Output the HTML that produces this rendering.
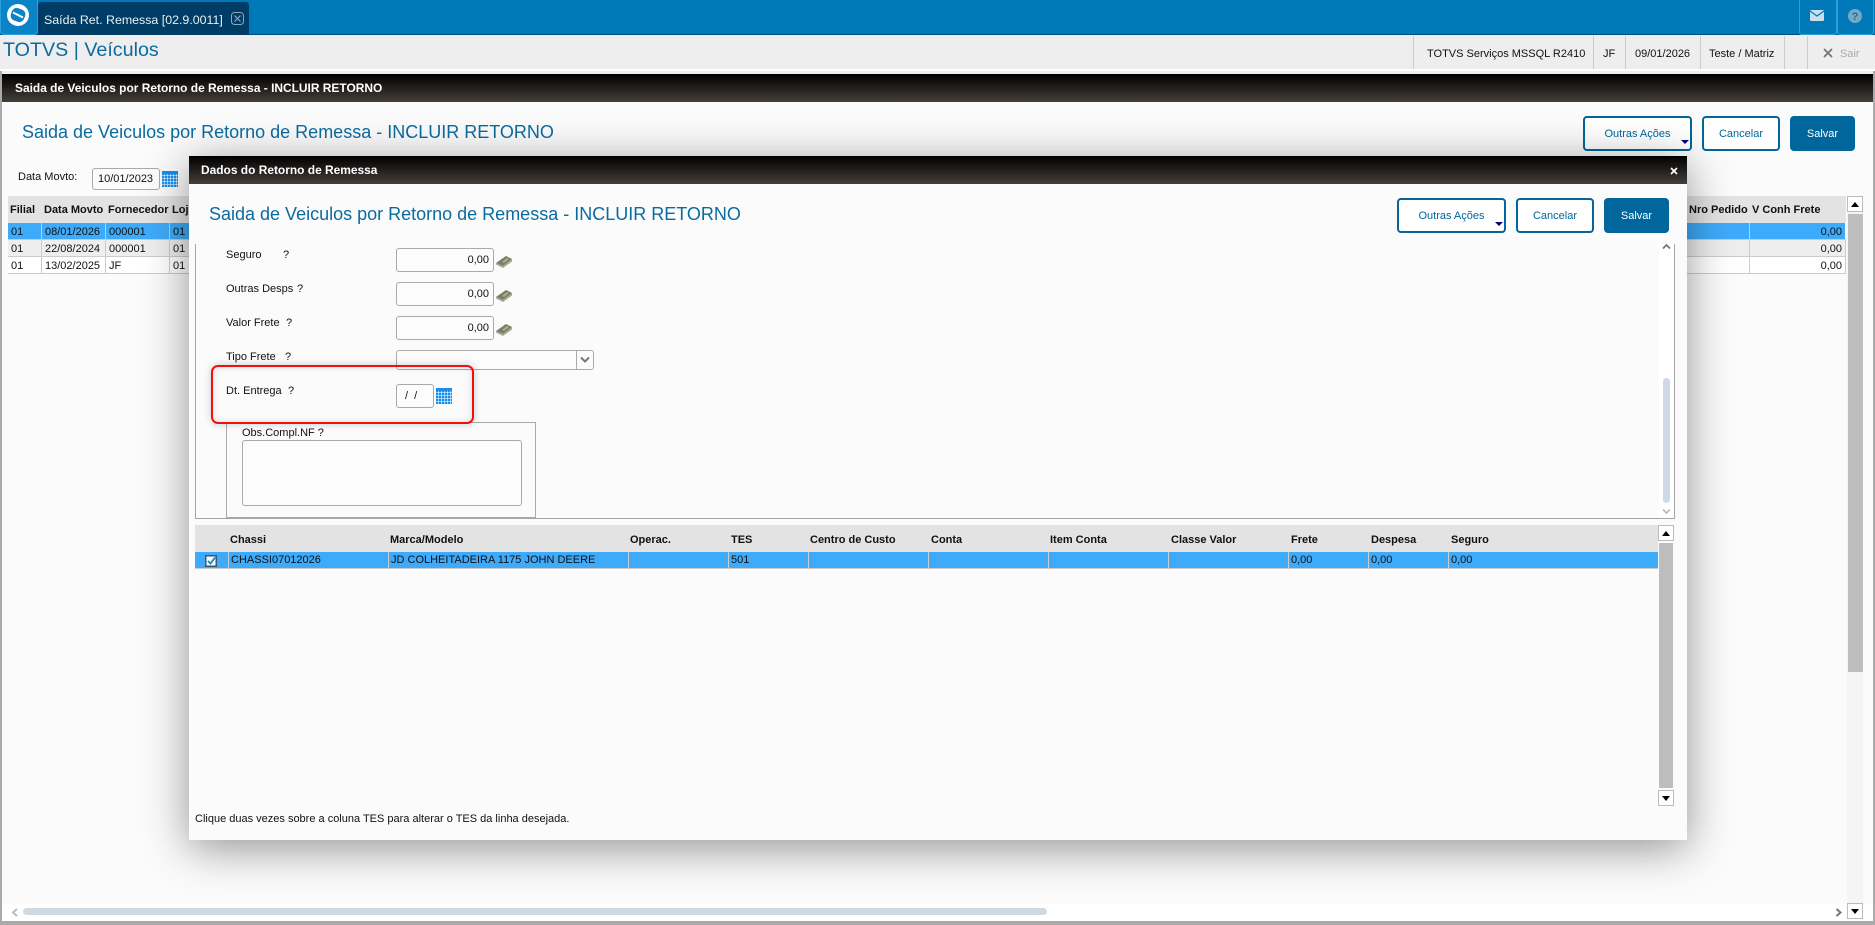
<!DOCTYPE html>
<html lang="pt-BR"><head><meta charset="utf-8"><title>TOTVS | Veículos</title>
<style>
*{box-sizing:border-box}
html,body{margin:0;padding:0;width:1875px;height:925px;overflow:hidden;background:#fbfbfb;font-family:"Liberation Sans",sans-serif;font-size:11px;color:#111}
.a{position:absolute}
.t{position:absolute;white-space:nowrap;line-height:14px;height:14px;margin-top:1px}
.b{font-weight:bold}
.inp{position:absolute;background:#fcfcfc;border:1px solid #aaa;border-radius:3px}
.btn{position:absolute;border:2px solid #00669b;border-radius:4px;background:#fff;color:#00669b;text-align:center;line-height:33px;height:35px}
.sv{background:#00669b;color:#fff}
.bar{position:absolute;background:linear-gradient(#000,#443f3b);color:#fff;font-weight:bold}
.v{position:absolute;width:1px;background:#ccc}
.h{position:absolute;height:1px;background:#ccc}
.cal{position:absolute;width:16px;height:16px;background-color:#1590ee;background-image:linear-gradient(#1590ee 3px,transparent 3px),repeating-linear-gradient(90deg,transparent 0 2px,rgba(255,255,255,.55) 2px 3px),repeating-linear-gradient(0deg,transparent 0 2px,rgba(255,255,255,.55) 2px 3px)}
.ttl{color:#0a6ba0;font-size:18px;line-height:24px;height:24px;white-space:nowrap;position:absolute}
.sb{position:absolute;background:#fff;border:1px solid #bbb;width:15px;height:16px}
.up:after,.dn:after{content:"";position:absolute;left:3px;border-left:4px solid transparent;border-right:4px solid transparent}
.up:after{top:5px;border-bottom:5px solid #000}
.dn:after{top:5px;border-top:5px solid #000}
svg{position:absolute;display:block}
</style></head><body>

<!-- top bar -->
<div class="a" style="left:0;top:0;width:1875px;height:35px;background:#0079b8;border-bottom:1px solid #00527e"></div>
<div class="a" style="left:0;top:0;width:38px;height:35px;background:#0a84c6;border:1px solid #2a9fdc;border-top:0;border-radius:0 0 4px 4px"></div>
<svg style="left:7px;top:4px" width="22" height="22" viewBox="0 0 22 22"><circle cx="11" cy="11" r="11" fill="#fff"/><rect x="4" y="4.5" width="14" height="13" rx="5" fill="#0a84c6" transform="rotate(20 11 11)"/><path d="M6 8.5L16 13.5" stroke="#fff" stroke-width="2"/></svg>
<div class="a" style="left:38px;top:2px;width:211px;height:33px;background:#003d66;border-radius:3px 3px 0 0"></div>
<span class="t" style="left:44px;top:12px;color:#e8f0f5;font-size:12.4px">Saída Ret. Remessa [02.9.0011]</span>
<svg style="left:231px;top:12px" width="13" height="13" viewBox="0 0 13 13"><rect x=".5" y=".5" width="12" height="12" rx="3" fill="none" stroke="#8fa6b6"/><path d="M3.5 3.5l6 6M9.5 3.5l-6 6" stroke="#8fa6b6" stroke-width="1.2"/></svg>
<div class="a" style="left:1799px;top:0;width:38px;height:35px;border:1px solid #2a9fdc;border-top:0;border-radius:0 0 3px 3px"></div>
<div class="a" style="left:1837px;top:0;width:37px;height:35px;border:1px solid #2a9fdc;border-top:0;border-radius:0 0 3px 3px"></div>
<svg style="left:1810px;top:10px" width="14" height="11" viewBox="0 0 14 11"><rect width="14" height="11" rx="1" fill="#c8dfee"/><path d="M0 1l7 5 7-5" fill="none" stroke="#0079b8" stroke-width="1.3"/></svg>
<svg style="left:1848px;top:9px" width="14" height="14" viewBox="0 0 14 14"><circle cx="7" cy="7" r="7" fill="#7aa7c2"/><text x="7" y="11" text-anchor="middle" font-family="Liberation Sans" font-weight="bold" font-size="11" fill="#0079b8">?</text></svg>

<!-- header band -->
<div class="a" style="left:0;top:35px;width:1875px;height:34px;background:#eee"></div>
<div class="a" style="left:0;top:69px;width:1875px;height:2px;background:#fff"></div>
<div class="a" style="left:0;top:71px;width:1875px;height:3px;background:#f0f0f0"></div>
<span class="t" style="left:3px;top:37px;font-size:19.7px;line-height:24px;height:24px;color:#0a6ba0">TOTVS | Veículos</span>
<div class="v" style="left:1413px;top:36px;height:33px"></div>
<div class="v" style="left:1593px;top:36px;height:33px"></div>
<div class="v" style="left:1625px;top:36px;height:33px"></div>
<div class="v" style="left:1700px;top:36px;height:33px"></div>
<div class="v" style="left:1784px;top:36px;height:33px"></div>
<div class="v" style="left:1807px;top:36px;height:33px"></div>
<span class="t" style="left:1427px;top:46px">TOTVS Serviços MSSQL R2410</span>
<span class="t" style="left:1603px;top:46px">JF</span>
<span class="t" style="left:1635px;top:46px">09/01/2026</span>
<span class="t" style="left:1709px;top:46px">Teste / Matriz</span>
<svg style="left:1823px;top:48px" width="10" height="10" viewBox="0 0 10 10"><path d="M1 1l8 8M9 1l-8 8" stroke="#777" stroke-width="1.8"/></svg>
<span class="t" style="left:1840px;top:46px;color:#aaa">Sair</span>

<!-- page frame -->
<div class="a" style="left:0;top:71px;width:2px;height:854px;background:#aaa"></div>
<div class="a" style="left:1873px;top:71px;width:2px;height:854px;background:#aaa"></div>
<div class="a" style="left:0;top:921px;width:1875px;height:4px;background:#aaa"></div>
<div class="bar" style="left:2px;top:74px;width:1871px;height:28px"></div>
<span class="t b" style="left:15px;top:80px;color:#fff;font-size:11.95px">Saida de Veiculos por Retorno de Remessa - INCLUIR RETORNO</span>
<div class="a" style="left:2px;top:904px;width:1871px;height:17px;background:#fff"></div>

<span class="ttl" style="left:22px;top:120px">Saida de Veiculos por Retorno de Remessa - INCLUIR RETORNO</span>
<div class="btn" style="left:1583px;top:116px;width:109px">Outras Ações</div>
<div class="a" style="left:1681px;top:140px;border-left:4px solid transparent;border-right:4px solid transparent;border-top:4px solid #00008b"></div>
<div class="btn" style="left:1702px;top:116px;width:78px">Cancelar</div>
<div class="btn sv" style="left:1790px;top:116px;width:65px">Salvar</div>

<span class="t" style="left:18px;top:169px">Data Movto:</span>
<div class="inp" style="left:92px;top:168px;width:68px;height:22px"></div>
<span class="t" style="left:98px;top:171px">10/01/2023</span>
<div class="cal" style="left:162px;top:171px"></div>

<!-- background grid -->
<div class="a" style="left:8px;top:196px;width:1838px;height:27px;background:#e3e3e3"></div>
<div class="a" style="left:8px;top:223px;width:1837px;height:16px;background:#3eabfa"></div>
<div class="a" style="left:8px;top:240px;width:1838px;height:16px;background:#eee"></div>
<div class="a" style="left:8px;top:257px;width:1838px;height:16px;background:#fff"></div>
<div class="h" style="left:8px;top:239px;width:1838px"></div>
<div class="h" style="left:8px;top:256px;width:1838px"></div>
<div class="h" style="left:8px;top:273px;width:1838px"></div>
<div class="v" style="left:41px;top:223px;height:50px"></div>
<div class="v" style="left:105px;top:223px;height:50px"></div>
<div class="v" style="left:169px;top:223px;height:50px"></div>
<div class="v" style="left:1749px;top:223px;height:50px"></div>
<div class="v" style="left:1845px;top:240px;height:34px"></div>
<span class="t b" style="left:10px;top:202px">Filial</span>
<span class="t b" style="left:44px;top:202px">Data Movto</span>
<span class="t b" style="left:108px;top:202px">Fornecedor</span>
<span class="t b" style="left:172px;top:202px">Loj</span>
<span class="t b" style="left:1689px;top:202px">Nro Pedido</span>
<span class="t b" style="left:1752px;top:202px">V Conh Frete</span>
<span class="t" style="left:11px;top:224px">01</span><span class="t" style="left:45px;top:224px">08/01/2026</span><span class="t" style="left:109px;top:224px">000001</span><span class="t" style="left:173px;top:224px">01</span><span class="t" style="right:33px;top:224px">0,00</span>
<span class="t" style="left:11px;top:241px">01</span><span class="t" style="left:45px;top:241px">22/08/2024</span><span class="t" style="left:109px;top:241px">000001</span><span class="t" style="left:173px;top:241px">01</span><span class="t" style="right:33px;top:241px">0,00</span>
<span class="t" style="left:11px;top:258px">01</span><span class="t" style="left:45px;top:258px">13/02/2025</span><span class="t" style="left:109px;top:258px">JF</span><span class="t" style="left:173px;top:258px">01</span><span class="t" style="right:33px;top:258px">0,00</span>

<!-- right scrollbar -->
<div class="a" style="left:1847px;top:196px;width:16px;height:708px;background:#f5f5f8"></div>
<div class="sb up" style="left:1847px;top:196px;width:16px"></div>
<div class="a" style="left:1848px;top:214px;width:15px;height:458px;background:#bdbdbd"></div>
<div class="sb dn" style="left:1847px;top:903px;width:16px"></div>
<svg style="left:1835px;top:908px" width="8" height="9" viewBox="0 0 8 9"><path d="M1.5 1l4 3.5-4 3.5" fill="none" stroke="#777" stroke-width="2"/></svg>
<!-- bottom scrollbar -->
<svg style="left:11px;top:908px" width="8" height="9" viewBox="0 0 8 9"><path d="M6 1L2 4.5 6 8" fill="none" stroke="#bbb" stroke-width="2"/></svg>
<div class="a" style="left:23px;top:908px;width:1024px;height:7px;background:#cfd9e3;border-radius:4px"></div>

<!-- modal -->
<div class="a" style="left:189px;top:156px;width:1498px;height:684px;background:#fbfbfb;box-shadow:0 8px 42px rgba(0,0,0,.42)"></div>
<div class="bar" style="left:189px;top:156px;width:1498px;height:28px"></div>
<span class="t b" style="left:201px;top:162px;color:#fff;font-size:11.95px">Dados do Retorno de Remessa</span>
<svg style="left:1670px;top:167px" width="8" height="8" viewBox="0 0 8 8"><path d="M1 1l6 6M7 1l-6 6" stroke="#fff" stroke-width="1.6"/></svg>
<span class="ttl" style="left:209px;top:202px">Saida de Veiculos por Retorno de Remessa - INCLUIR RETORNO</span>
<div class="btn" style="left:1397px;top:198px;width:109px">Outras Ações</div>
<div class="a" style="left:1495px;top:222px;border-left:4px solid transparent;border-right:4px solid transparent;border-top:4px solid #00008b"></div>
<div class="btn" style="left:1516px;top:198px;width:78px">Cancelar</div>
<div class="btn sv" style="left:1604px;top:198px;width:65px">Salvar</div>

<!-- form group -->
<div class="a" style="left:195px;top:244px;width:1480px;height:275px;border:1px solid #a5a5a5;border-top:0"></div>
<div class="a" style="left:1659px;top:244px;width:15px;height:274px;background:#fff"></div>
<svg style="left:1662px;top:243px" width="9" height="7" viewBox="0 0 9 7"><path d="M1 5.5l3.5-3.5L8 5.5" fill="none" stroke="#777" stroke-width="1.8"/></svg>
<div class="a" style="left:1663px;top:378px;width:7px;height:125px;background:#cfd9e3;border-radius:4px"></div>
<svg style="left:1662px;top:508px" width="9" height="7" viewBox="0 0 9 7"><path d="M1 1.5L4.5 5 8 1.5" fill="none" stroke="#bbb" stroke-width="1.8"/></svg>

<span class="t" style="left:226px;top:247px">Seguro</span><span class="t" style="left:283px;top:247px">?</span>
<span class="t" style="left:226px;top:281px">Outras Desps</span><span class="t" style="left:297px;top:281px">?</span>
<span class="t" style="left:226px;top:315px">Valor Frete</span><span class="t" style="left:286px;top:315px">?</span>
<span class="t" style="left:226px;top:349px">Tipo Frete</span><span class="t" style="left:285px;top:349px">?</span>
<span class="t" style="left:226px;top:383px">Dt. Entrega</span><span class="t" style="left:288px;top:383px">?</span>

<div class="inp" style="left:396px;top:248px;width:98px;height:24px"></div><span class="t" style="right:1386px;top:252px">0,00</span>
<div class="inp" style="left:396px;top:282px;width:98px;height:24px"></div><span class="t" style="right:1386px;top:286px">0,00</span>
<div class="inp" style="left:396px;top:316px;width:98px;height:24px"></div><span class="t" style="right:1386px;top:320px">0,00</span>
<svg style="left:496px;top:254px" width="17" height="15" viewBox="0 0 17 15"><path d="M0 9L10 2l6 3-9 7z" fill="#7f7a6c"/><path d="M0 9l7 3 9-7v2.5l-9 6.5-7-3.5z" fill="#a8a59c"/><path d="M6 8l5-4 2 1-5 4z" fill="#9dbb74"/></svg>
<svg style="left:496px;top:288px" width="17" height="15" viewBox="0 0 17 15"><path d="M0 9L10 2l6 3-9 7z" fill="#7f7a6c"/><path d="M0 9l7 3 9-7v2.5l-9 6.5-7-3.5z" fill="#a8a59c"/><path d="M6 8l5-4 2 1-5 4z" fill="#9dbb74"/></svg>
<svg style="left:496px;top:322px" width="17" height="15" viewBox="0 0 17 15"><path d="M0 9L10 2l6 3-9 7z" fill="#7f7a6c"/><path d="M0 9l7 3 9-7v2.5l-9 6.5-7-3.5z" fill="#a8a59c"/><path d="M6 8l5-4 2 1-5 4z" fill="#9dbb74"/></svg>

<div class="inp" style="left:396px;top:350px;width:198px;height:20px"></div>
<div class="v" style="left:576px;top:350px;height:20px;background:#aaa"></div>
<svg style="left:580px;top:356px" width="10" height="8" viewBox="0 0 10 8"><path d="M1 1.5L5 5.5 9 1.5" fill="none" stroke="#777" stroke-width="2"/></svg>

<div class="inp" style="left:396px;top:384px;width:38px;height:24px"></div>
<span class="t" style="left:405px;top:388px">/&nbsp;&nbsp;/</span>
<div class="cal" style="left:436px;top:388px"></div>

<div class="a" style="left:226px;top:422px;width:310px;height:96px;border:1px solid #aaa"></div>
<span class="t" style="left:242px;top:425px">Obs.Compl.NF ?</span>
<div class="inp" style="left:242px;top:440px;width:280px;height:66px"></div>

<!-- red highlight -->
<div class="a" style="left:211px;top:365px;width:263px;height:59px;border:2px solid #f01010;border-radius:7px;box-shadow:0 0 8px rgba(0,0,0,.2),inset 0 0 8px rgba(0,0,0,.12)"></div>

<!-- grid in modal -->
<div class="a" style="left:195px;top:525px;width:1463px;height:27px;background:#e3e3e3"></div>
<div class="a" style="left:195px;top:552px;width:1463px;height:17px;background:#3eabfa;border-bottom:1px solid #ccc"></div>
<div class="v" style="left:228px;top:552px;height:16px"></div>
<div class="v" style="left:388px;top:552px;height:16px"></div>
<div class="v" style="left:628px;top:552px;height:16px"></div>
<div class="v" style="left:728px;top:552px;height:16px"></div>
<div class="v" style="left:808px;top:552px;height:16px"></div>
<div class="v" style="left:928px;top:552px;height:16px"></div>
<div class="v" style="left:1048px;top:552px;height:16px"></div>
<div class="v" style="left:1168px;top:552px;height:16px"></div>
<div class="v" style="left:1288px;top:552px;height:16px"></div>
<div class="v" style="left:1368px;top:552px;height:16px"></div>
<div class="v" style="left:1448px;top:552px;height:16px"></div>
<span class="t b" style="left:230px;top:532px">Chassi</span>
<span class="t b" style="left:390px;top:532px">Marca/Modelo</span>
<span class="t b" style="left:630px;top:532px">Operac.</span>
<span class="t b" style="left:731px;top:532px">TES</span>
<span class="t b" style="left:810px;top:532px">Centro de Custo</span>
<span class="t b" style="left:931px;top:532px">Conta</span>
<span class="t b" style="left:1050px;top:532px">Item Conta</span>
<span class="t b" style="left:1171px;top:532px">Classe Valor</span>
<span class="t b" style="left:1291px;top:532px">Frete</span>
<span class="t b" style="left:1371px;top:532px">Despesa</span>
<span class="t b" style="left:1451px;top:532px">Seguro</span>
<svg style="left:205px;top:555px" width="12" height="12" viewBox="0 0 12 12"><rect x=".75" y=".75" width="10.5" height="10.5" fill="#f4f8fa" stroke="#37587a" stroke-width="1.5"/><path d="M3 6l2.5 2.5L10 2.5" fill="none" stroke="#1e8a9a" stroke-width="1.8"/></svg>
<span class="t" style="left:231px;top:552px">CHASSI07012026</span>
<span class="t" style="left:391px;top:552px">JD COLHEITADEIRA 1175 JOHN DEERE</span>
<span class="t" style="left:731px;top:552px">501</span>
<span class="t" style="left:1291px;top:552px">0,00</span>
<span class="t" style="left:1371px;top:552px">0,00</span>
<span class="t" style="left:1451px;top:552px">0,00</span>
<div class="sb up" style="left:1658px;top:525px;width:16px"></div>
<div class="a" style="left:1659px;top:543px;width:14px;height:245px;background:#bdbdbd"></div>
<div class="sb dn" style="left:1658px;top:790px;width:16px"></div>
<span class="t" style="left:195px;top:811px">Clique duas vezes sobre a coluna TES para alterar o TES da linha desejada.</span>

</body></html>
